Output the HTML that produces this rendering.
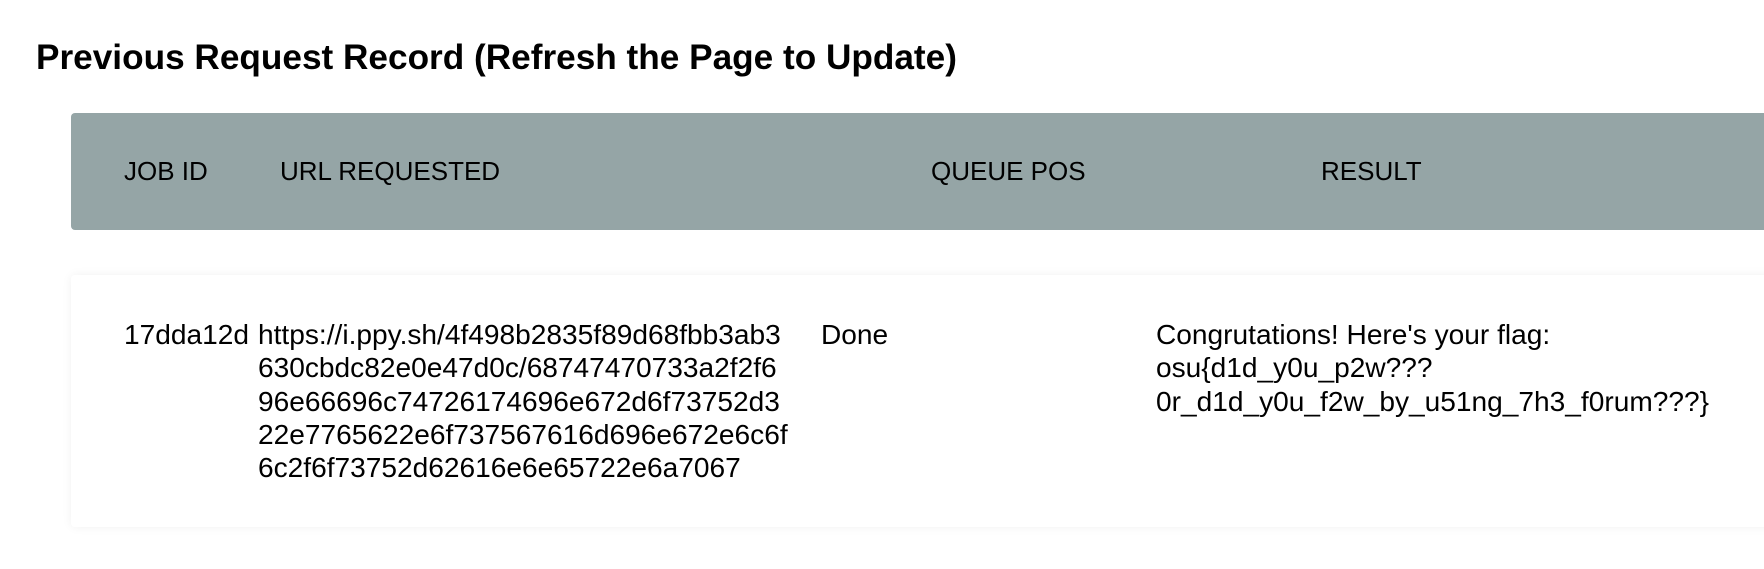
<!DOCTYPE html>
<html><head><meta charset="utf-8"><style>
body{margin:0;width:1764px;height:569px;background:#fff;font-family:"Liberation Sans",Arial,sans-serif;color:#000;position:relative;overflow:hidden}
h1{position:absolute;left:36px;top:36px;margin:0;font-size:35.2px;font-weight:bold;line-height:44px}
.hd{position:absolute;left:71px;top:113px;width:1720px;height:117px;background:#95a5a6;border-radius:4px}
.hd span{position:absolute;top:0;line-height:117px;font-size:26px}
.card{position:absolute;left:71px;top:275px;width:1720px;height:252px;background:#fff;border-radius:4px;box-shadow:0 0 10px rgba(0,0,0,0.06)}
.c{position:absolute;top:43px;font-size:28.1px;line-height:33.3px}
</style></head><body>
<h1>Previous Request Record (Refresh the Page to Update)</h1>
<div class="hd">
<span style="left:53px">JOB ID</span>
<span style="left:209px">URL REQUESTED</span>
<span style="left:860px">QUEUE POS</span>
<span style="left:1250px">RESULT</span>
</div>
<div class="card">
<div class="c" style="left:53px">17dda12d</div>
<div class="c" style="left:187px">https://i.ppy.sh/4f498b2835f89d68fbb3ab3<br>630cbdc82e0e47d0c/68747470733a2f2f6<br>96e66696c74726174696e672d6f73752d3<br>22e7765622e6f737567616d696e672e6c6f<br>6c2f6f73752d62616e6e65722e6a7067</div>
<div class="c" style="left:750px">Done</div>
<div class="c" style="left:1085px">Congrutations! Here's your flag:<br>osu{d1d_y0u_p2w???<br>0r_d1d_y0u_f2w_by_u51ng_7h3_f0rum???}</div>
</div>
</body></html>
